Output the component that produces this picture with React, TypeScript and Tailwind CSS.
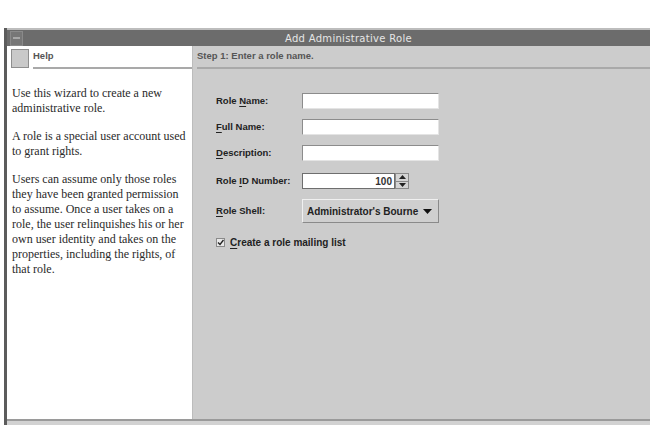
import React from 'react';

const helpLines: string[][] = [
  ['Use this wizard to create a new', 'administrative role.'],
  ['A role is a special user account used', 'to grant rights.'],
  [
    'Users can assume only those roles',
    'they have been granted permission',
    'to assume. Once a user takes on a',
    'role, the user relinquishes his or her',
    'own user identity and takes on the',
    'properties, including the rights, of',
    'that role.',
  ],
];

const Label = ({ pre, key1, post }: { pre: string; key1: string; post: string }) => (
  <span className="w-[86px] shrink-0 text-[9.5px] font-bold text-[#222]">
    {pre}
    <u className="underline-offset-2">{key1}</u>
    {post}
  </span>
);

const TextField = () => (
  <div className="w-[137px] h-[16px] bg-white border border-[#8c8c8c] border-b-[#e4e4e4] border-r-[#e4e4e4]" />
);

const App = () => {
  return (
    <div className="w-[650px] h-[425px] bg-white overflow-hidden flex flex-col font-['Liberation_Sans',Arial,sans-serif]">
      <div className="h-[28px] shrink-0" />
      <div className="flex-1 flex flex-col ml-[4px] border-l-[3px] border-[#5c5c5c] bg-[#d2d2d2]">
        {/* title bar */}
        <div className="h-[2px] bg-[#bdbdbd]" />
        <div className="h-[16px] bg-[#6c6c6c] flex items-center">
          <div className="ml-[3px] w-[13px] h-[15px] border border-[#8a8a8a] bg-[#777] flex items-center justify-center">
            <div className="w-[7px] h-[2px] bg-[#a8a8a8]" />
          </div>
          <span className="ml-[262px] text-[10px] tracking-[0.3px] text-[#e6e6e6] font-['DejaVu_Sans',sans-serif]">
            Add Administrative Role
          </span>
        </div>

        <div className="flex-1 flex">
          {/* help panel */}
          <div className="w-[186px] shrink-0 bg-white border-r border-[#bcbcbc] flex flex-col">
            <div className="h-[23px] flex items-end pl-[4px]">
              <div className="w-[18px] h-[19px] mb-[1px] bg-[#c9c9c9] border border-[#8e8e8e]" />
              <div className="flex-1 ml-[4px] h-[23px] flex items-center border-b-2 border-[#a9a9a9]">
                <span className="text-[9.5px] font-bold text-[#555]">Help</span>
              </div>
            </div>
            <div className="pl-[5px] pt-[17px] font-['Liberation_Serif','Times_New_Roman',serif] text-[12px] leading-[15px] text-[#2a2a2a] flex flex-col gap-[13px]">
              {helpLines.map((para, i) => (
                <p key={i} className="whitespace-nowrap">
                  {para.map((line, j) => (
                    <React.Fragment key={j}>
                      {line}
                      {j < para.length - 1 && <br />}
                    </React.Fragment>
                  ))}
                </p>
              ))}
            </div>
          </div>

          {/* step panel */}
          <div className="flex-1 bg-[#cccccc] flex flex-col">
            <div className="h-[23px] ml-[4px] flex items-center border-b-2 border-[#a9a9a9]">
              <span className="text-[9.5px] font-bold text-[#555]">Step 1: Enter a role name.</span>
            </div>

            <div className="pl-[23px] pt-[24px] flex flex-col">
              <div className="flex items-center h-[16px]">
                <Label pre="Role " key1="N" post="ame:" />
                <TextField />
              </div>
              <div className="flex items-center h-[16px] mt-[10px]">
                <Label pre="" key1="F" post="ull Name:" />
                <TextField />
              </div>
              <div className="flex items-center h-[16px] mt-[10px]">
                <Label pre="" key1="D" post="escription:" />
                <TextField />
              </div>
              <div className="flex items-center h-[16px] mt-[12px]">
                <Label pre="Role " key1="I" post="D Number:" />
                <div className="w-[93px] h-[16px] bg-white border border-[#6e6e6e] flex items-center justify-end pr-[2px]">
                  <span className="text-[10px] font-bold text-[#333]">100</span>
                </div>
                <div className="w-[14px] h-[16px] flex flex-col border border-[#8a8a8a] bg-[#d4d4d4]">
                  <div className="flex-1 flex items-center justify-center border-b border-[#8a8a8a]">
                    <svg width="7" height="4" viewBox="0 0 7 4">
                      <path d="M0 4 L3.5 0 L7 4 Z" fill="#222" />
                    </svg>
                  </div>
                  <div className="flex-1 flex items-center justify-center">
                    <svg width="7" height="4" viewBox="0 0 7 4">
                      <path d="M0 0 L3.5 4 L7 0 Z" fill="#222" />
                    </svg>
                  </div>
                </div>
              </div>
              <div className="flex items-center h-[24px] mt-[10px]">
                <Label pre="" key1="R" post="ole Shell:" />
                <div className="w-[137px] h-[24px] bg-[#cfcfcf] border border-[#f0f0f0] border-b-[#8a8a8a] border-r-[#8a8a8a] flex items-center pl-[4px] pr-[6px] justify-between">
                  <span className="text-[10px] font-bold text-[#222]">Administrator's Bourne</span>
                  <svg width="9" height="5" viewBox="0 0 9 5">
                    <path d="M0 0 L9 0 L4.5 5 Z" fill="#111" />
                  </svg>
                </div>
              </div>
              <div className="flex items-center h-[14px] mt-[12px]">
                <div className="w-[9px] h-[9px] bg-[#e8e8e8] border border-[#8a8a8a] flex items-center justify-center">
                  <svg width="7" height="7" viewBox="0 0 7 7">
                    <path d="M1 3.5 L3 5.5 L6.5 1" stroke="#222" strokeWidth="1.4" fill="none" />
                  </svg>
                </div>
                <span className="ml-[5px] text-[10px] font-bold text-[#222]">
                  <u className="underline-offset-2">C</u>reate a role mailing list
                </span>
              </div>
            </div>
          </div>
        </div>

        {/* bottom edge */}
        <div className="h-[2px] bg-[#9a9a9a]" />
        <div className="h-[4px] bg-[#d2d2d2]" />
      </div>
    </div>
  );
};

export default App;
